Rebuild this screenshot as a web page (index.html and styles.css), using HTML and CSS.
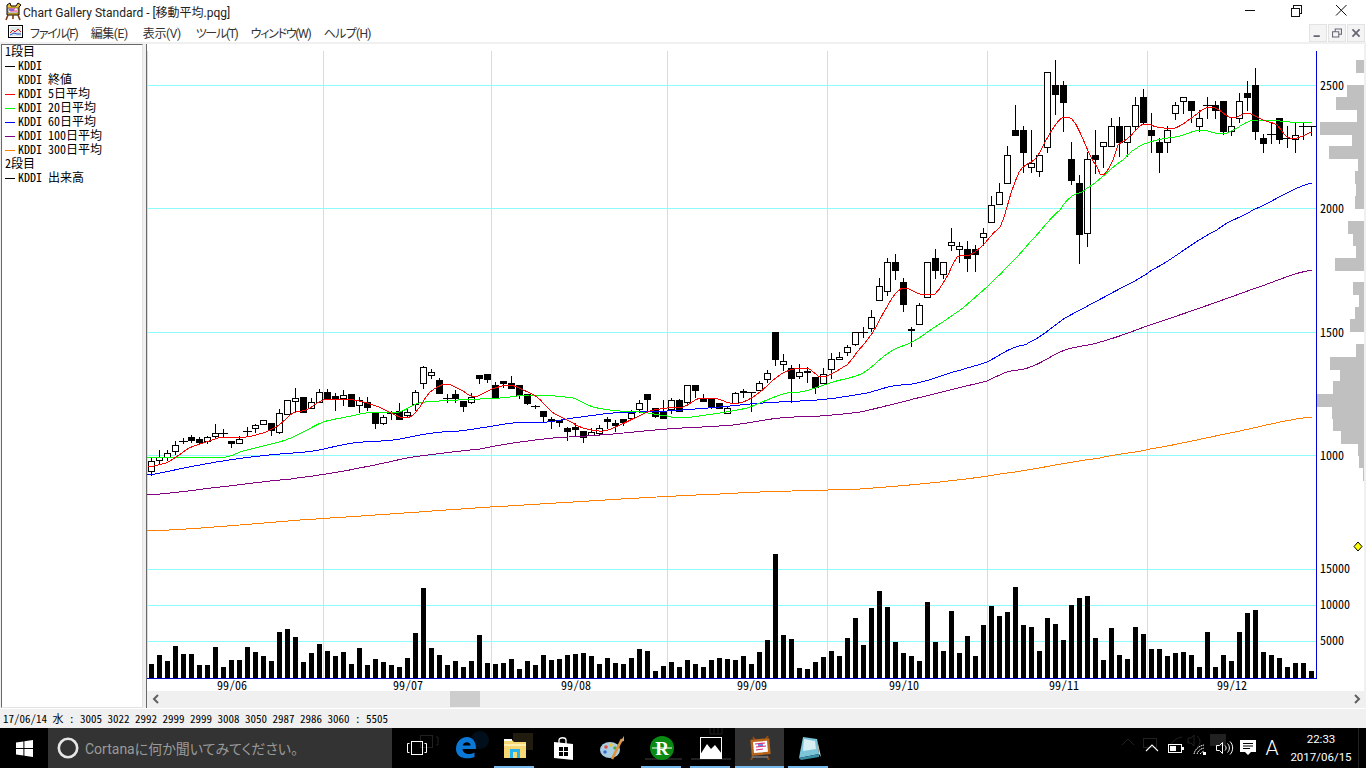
FILE: index.html
```html
<!DOCTYPE html>
<html lang="ja">
<head>
<meta charset="utf-8">
<title>Chart Gallery Standard</title>
<link rel="stylesheet" href="styles.css">
</head>
<body>
<div class="app">
  <header class="titlebar">
    <svg class="app-icon" width="20" height="20" viewBox="0 0 20 20">
      <path d="M4 4 L7 2 L8 5 L13 5 L15 2 L18 4 L16 6 L16 14 L4 14 L4 6 Z" fill="#f4c430" stroke="#000" stroke-width="1"/>
      <rect x="5" y="7" width="10" height="5" fill="#fff" stroke="#333" stroke-width=".6"/>
      <path d="M6 8 H12 M7 10 H14" stroke="#e0208a" stroke-width="1"/>
      <path d="M6 9 H11" stroke="#2040d0" stroke-width="1"/>
      <path d="M5 14 L3 19 M15 14 L17 19 M10 14 V18" stroke="#7a3b10" stroke-width="1.6"/>
    </svg>
    <span class="title-text">Chart Gallery Standard - [移動平均.pqg]</span>
    <div class="win-controls">
      <svg class="wc" width="46" height="22" viewBox="0 0 46 22"><path class="wc-line" d="M17 10.5 H27"/></svg>
      <svg class="wc" width="46" height="22" viewBox="0 0 46 22"><path class="wc-line" d="M17.5 8.5 H25.5 V16.5 H17.5 Z M19.5 8 V5.5 H27.5 V13.5 H26"/></svg>
      <svg class="wc" width="46" height="22" viewBox="0 0 46 22"><path class="wc-line" d="M16 5 L26.5 15.5 M26.5 5 L16 15.5"/></svg>
    </div>
  </header>

  <nav class="menubar">
    <svg class="doc-icon" width="16" height="14" viewBox="0 0 16 14">
      <rect x=".5" y=".5" width="14" height="12" fill="#fff" stroke="#000"/>
      <rect x="2" y="2" width="11" height="9" fill="#dfe8e8"/>
      <path d="M2 8 L5 5 L7 7 L10 4 L13 7" fill="none" stroke="#e02020"/>
      <path d="M2 10 L6 8 L9 9 L13 9" fill="none" stroke="#2050d0"/>
    </svg>
    <span class="menu-item kana">ファイル(F)</span>
    <span class="menu-item kanji">編集(E)</span>
    <span class="menu-item kanji">表示(V)</span>
    <span class="menu-item kana">ツール(T)</span>
    <span class="menu-item kana">ウィンドウ(W)</span>
    <span class="menu-item mid">ヘルプ(H)</span>
    <div class="mdi-controls">
      <svg class="mdi" viewBox="0 0 18 18"><path class="mdi-ico" d="M4 12.5 H11" /></svg>
      <svg class="mdi" viewBox="0 0 18 18"><path class="mdi-thin" d="M4 7.5 H11 V13.5 H4 Z M7 7 V4.5 H14 V10.5 H11"/></svg>
      <svg class="mdi" viewBox="0 0 18 18"><path class="mdi-ico" d="M5 5 L13 13 M13 5 L5 13"/></svg>
    </div>
  </nav>

  <main class="workspace">
    <aside class="legend">
      <div class="legend-row">1段目</div>
      <div class="legend-row"><i class="swatch sw-black"></i>KDDI</div>
      <div class="legend-row"><i class="swatch"></i>KDDI 終値</div>
      <div class="legend-row"><i class="swatch sw-red"></i>KDDI 5日平均</div>
      <div class="legend-row"><i class="swatch sw-green"></i>KDDI 20日平均</div>
      <div class="legend-row"><i class="swatch sw-blue"></i>KDDI 60日平均</div>
      <div class="legend-row"><i class="swatch sw-purple"></i>KDDI 100日平均</div>
      <div class="legend-row"><i class="swatch sw-orange"></i>KDDI 300日平均</div>
      <div class="legend-row">2段目</div>
      <div class="legend-row"><i class="swatch sw-black"></i>KDDI 出来高</div>
    </aside>
    <section class="chart-pane">
      <svg id="chart" class="chart" width="1217" height="647" viewBox="147 44 1217 647" xmlns="http://www.w3.org/2000/svg">
        <g class="grid" id="grid"></g>
        <g id="hist"></g>
        <g id="vol"></g>
        <g id="candles"></g>
        <g id="lines"></g>
        <g class="axis-labels">
          <text x="1320" y="90">2500</text>
          <text x="1320" y="213">2000</text>
          <text x="1320" y="337">1500</text>
          <text x="1320" y="460">1000</text>
          <text x="1320" y="573">15000</text>
          <text x="1320" y="609">10000</text>
          <text x="1320" y="645">5000</text>
          <text x="217" y="690">99/06</text>
          <text x="393" y="690">99/07</text>
          <text x="561" y="690">99/08</text>
          <text x="737" y="690">99/09</text>
          <text x="889" y="690">99/10</text>
          <text x="1049" y="690">99/11</text>
          <text x="1217" y="690">99/12</text>
        </g>
        <polygon class="marker" points="1358,542 1362,546.5 1358,551 1354,546.5"/>
      </svg>
      <div class="scrollbar">
        <svg class="sb-arrow" width="18" height="16" viewBox="0 0 18 16"><path d="M11 4 L7 8 L11 12"/></svg>
        <div class="sb-track"><div class="sb-thumb"></div></div>
        <svg class="sb-arrow" width="18" height="16" viewBox="0 0 18 16"><path d="M7 4 L11 8 L7 12"/></svg>
      </div>
    </section>
  </main>

  <footer class="statusbar">17/06/14 水 : 3005 3022 2992 2999 2999 3008 3050 2987 2986 3060 : 5505</footer>

  <div class="taskbar">
    <svg class="ghosts" width="1366" height="40" viewBox="0 728 1366 40">
      <rect x="420.5" y="735.5" width="12" height="12" fill="none" stroke="#fff"/>
      <path d="M436 737 H438 V745 H436" fill="none" stroke="#fff"/>
      <circle cx="480" cy="740" r="9" fill="#0a78d7"/>
      <rect x="513" y="733" width="20" height="17" fill="#f7d774"/>
      <path d="M645 759 H682 M691 759 H731" stroke="#fff" stroke-width="2"/>
      <path d="M710 728 V734 H722 V728 M714 728 V733 M718 728 V733" fill="none" stroke="#fff"/>
      <path d="M1122 745 L1128 739 L1134 745" fill="none" stroke="#fff"/>
      <rect x="1143.5" y="738.5" width="13" height="9" fill="none" stroke="#fff"/>
      <path d="M1170 747 C1171 742 1176 738 1182 737" fill="none" stroke="#fff"/>
      <path d="M1188 738 H1191 L1194 735 V746 L1191 743 H1188 Z M1197 736 C1201 739 1201 744 1197 747" fill="none" stroke="#fff"/>
      <rect x="1210" y="734" width="16" height="12" fill="#fff"/>
    </svg>
    <div class="start">
      <svg width="17" height="17" viewBox="0 0 17 17"><path fill="#fff" d="M0 2.4 L7.4 1.4 V8 H0 Z M8.4 1.2 L17 0 V8 H8.4 Z M0 9 H7.4 V15.6 L0 14.6 Z M8.4 9 H17 V17 L8.4 15.8 Z"/></svg>
    </div>
    <div class="cortana">
      <svg width="22" height="22" viewBox="0 0 22 22"><circle cx="11" cy="11" r="9.2" fill="none" stroke="#e6e6e6" stroke-width="2.6"/></svg>
      <span class="cortana-text">Cortanaに何か聞いてみてください。</span>
    </div>
    <div class="tasks">
      <div class="task">
        <svg width="20" height="16" viewBox="0 0 20 16"><rect x="4.5" y="1.5" width="11" height="13" fill="none" stroke="#fff"/><path d="M2.5 3.5 H.5 V12.5 H2.5 M17.5 3.5 H19.5 V12.5 H17.5" fill="none" stroke="#fff"/></svg>
      </div>
      <div class="task">
        <svg width="22" height="22" viewBox="0 0 22 22"><path fill="#0a78d7" d="M1 12 C1 4 7 0 12 0 C18 0 21 5 21 12 H7.5 C8 17 14 18.5 19.5 15.5 V20 C13 22.5 1 22 1 12 Z M7.6 8.5 H15.5 C15.5 4.5 9 4 7.6 8.5 Z"/></svg>
      </div>
      <div class="task run">
        <svg width="22" height="20" viewBox="0 0 22 20"><path fill="#f7d774" d="M0 2 H8 L10 4 H22 V20 H0 Z"/><path fill="#fdf0b0" d="M0 6 H22 V8 H0 Z"/><path fill="#fff" d="M0 1 H8 V3 H0Z"/><path fill="#25b5ea" d="M6 11 H16 V20 H13 V14 H9 V20 H6 Z"/></svg>
      </div>
      <div class="task">
        <svg width="21" height="23" viewBox="0 0 21 23"><path fill="#fff" d="M1 5 L20 7 V23 L1 21 Z"/><path fill="none" stroke="#fff" stroke-width="1.3" d="M6 6 V3 C6 0 13 0 13 3 V7"/><path fill="#000" d="M6 10 H10 V14 H6 Z M11 10 H15 V14 H11 Z M6 15 H10 V19 H6 Z M11 15 H15 V19 H11 Z"/></svg>
      </div>
      <div class="task">
        <svg width="26" height="24" viewBox="0 0 26 24"><ellipse cx="10" cy="14" rx="10" ry="8" fill="#a9cfe4"/><circle cx="6" cy="11" r="1.8" fill="#e34d3b"/><circle cx="11" cy="9" r="1.8" fill="#f2c230"/><circle cx="15" cy="12" r="1.8" fill="#4aa84f"/><circle cx="5" cy="16" r="1.8" fill="#3b6fd0"/><path d="M12 23 L22 3" stroke="#e0923a" stroke-width="2.6"/><path d="M20 6 L24 0 L24 5 Z" fill="#caa37a"/></svg>
      </div>
      <div class="task run">
        <svg width="24" height="24" viewBox="0 0 24 24"><circle cx="12" cy="12" r="12" fill="#0a8a12"/><path d="M2 12 H22" stroke="#fff" stroke-width="1"/><text class="r-logo" x="12" y="19" text-anchor="middle">R</text></svg>
      </div>
      <div class="task run">
        <svg width="22" height="22" viewBox="0 0 22 22"><rect width="22" height="22" fill="#fff"/><rect x="1" y="1" width="20" height="15" fill="#000"/><path d="M0 22 V18 L7 7 L11 12 L15 8 L22 17 V22 Z" fill="#fff"/></svg>
      </div>
      <div class="task run active">
        <svg width="22" height="24" viewBox="0 0 22 24"><path d="M4 1 L6 4 M19 0 L16 4 M4 20 L2 24 M18 20 L20 24" stroke="#8a4a14" stroke-width="2"/><rect x="2" y="3" width="19" height="16" fill="#b9651c" transform="rotate(-5 11 11)"/><rect x="4.5" y="5.5" width="14" height="11" fill="#fff" transform="rotate(-5 11 11)"/><path d="M6 8 L16 7 M7 11 L17 10 M7 14 L14 13" stroke="#d4307a" stroke-width="1.2"/><path d="M9 9 L14 9" stroke="#2040d0" stroke-width="1.2"/><path d="M3 21 H19" stroke="#777" stroke-width="1.5"/></svg>
      </div>
      <div class="task run">
        <svg width="24" height="24" viewBox="0 0 24 24"><path fill="#7cc4d8" d="M6 1 L20 3 L22 18 L2 22 Z"/><path fill="#d7eef3" d="M7 3 L18 5 L19 13 L6 15 Z"/><path fill="#3a8fa8" d="M2 22 L22 18 L22 21 L4 24 Z"/><path fill="#e9e1cf" d="M20 3 L24 21 L22 18 Z"/></svg>
      </div>
    </div>
    <div class="tray">
      <svg class="tray-ico" width="24" height="16" viewBox="0 0 24 16"><path d="M6 11 L12 5 L18 11" fill="none" stroke="#fff" stroke-width="1.1"/></svg>
      <svg class="tray-ico" width="24" height="16" viewBox="0 0 24 16"><rect x="4.5" y="4.5" width="13" height="8" fill="none" stroke="#fff"/><rect x="6" y="6" width="6" height="5" fill="#fff"/><rect x="18" y="7" width="2" height="3" fill="#fff"/></svg>
      <svg class="tray-ico" width="24" height="16" viewBox="0 0 24 16"><path d="M6 14 C7 9 11 6 16 5 M9 14 C10 11 12 9 16 8 M12 14 C13 13 14 12 16 11" fill="none" stroke="#fff" stroke-dasharray="1.6 .6"/><rect x="15" y="12" width="3" height="3" fill="#fff"/></svg>
      <svg class="tray-ico" width="24" height="16" viewBox="0 0 24 16"><path d="M4.5 5.5 H7.5 L10.5 2.5 V13.5 L7.5 10.5 H4.5 Z M13 5.5 C14.5 7 14.5 9 13 10.5 M15.5 3.5 C18 6 18 10 15.5 12.5 M18 1.5 C21.5 5 21.5 11 18 14.5" fill="none" stroke="#fff"/></svg>
      <svg class="tray-ico" width="24" height="18" viewBox="0 0 24 18"><path fill="#fff" d="M4 1 H20 V13 H15 L12 16 L9 13 H4 Z"/><path d="M7 4.5 H17 M7 7 H17 M7 9.5 H14" stroke="#000"/></svg>
      <span class="tray-a">A</span>
      <div class="clock"><span>22:33</span><span>2017/06/15</span></div>
      <div class="desktop-peek"></div>
    </div>
  </div>
</div>
<script src="chart.js"></script>
</body>
</html>
```
FILE: styles.css
```css
* { box-sizing: border-box; }
html, body { margin: 0; padding: 0; }
body { width: 1366px; height: 768px; overflow: hidden; background: #f0f0f0; }
.app { width: 1366px; height: 768px; display: flex; flex-direction: column; font-family: "Roboto", "Noto Sans CJK JP", sans-serif; color: #000; }

.titlebar { height: 22px; background: #fff; display: flex; align-items: center; padding-left: 3px; flex: none; }
.app-icon { flex: none; }
.title-text { font-size: 12px; color: #222; white-space: nowrap; font-feature-settings: "palt"; }
.win-controls { margin-left: auto; display: flex; }
.wc { display: block; }
.wc-line { fill: none; stroke: #111; stroke-width: 1; shape-rendering: crispEdges; }
.wc:nth-child(3) .wc-line { shape-rendering: auto; }

.menubar { height: 20px; background: #fff; display: flex; align-items: center; padding-left: 8px; flex: none; font-size: 12px; color: #333; font-feature-settings: "palt"; }
.doc-icon { flex: none; margin-right: 6px; }
.menu-item { margin-right: 15px; white-space: nowrap; }
.kana { letter-spacing: -1.3px; margin-right: 13.3px; }
.kanji { letter-spacing: -.4px; }
.mid { letter-spacing: -.7px; }
.mdi-controls { margin-left: auto; display: flex; gap: 1px; padding-right: 1px; align-self: flex-start; padding-top: 2px; }
.mdi { width: 18px; height: 18px; border: 1px solid #e3e3e3; background: #f4f4f4; display: block; }
.mdi-ico { fill: none; stroke: #667; stroke-width: 2; }
.mdi-thin { fill: none; stroke: #667; stroke-width: 1.2; }

.workspace { flex: none; height: 666px; display: flex; padding-top: 2px; background: #f0f0f0; }
.legend { width: 142px; margin-left: 1px; height: 664px; background: #fff; border: 1px solid; border-color: #696969 #e3e3e3 #e3e3e3 #696969; font-family: "Noto Sans CJK JP", sans-serif; font-feature-settings: "hwid"; font-size: 12px; }
.legend-row { height: 14px; line-height: 12px; padding: 0 0 2px 3px; display: flex; align-items: center; white-space: pre; }
.swatch { display: block; width: 10px; height: 1px; margin: 2px 3px 0 0; flex: none; }
.sw-black { background: #000; }
.sw-red { background: #f00; }
.sw-green { background: #0f0; }
.sw-blue { background: #00f; }
.sw-purple { background: #800080; }
.sw-orange { background: #ff8000; }

.chart-pane { margin-left: 3px; width: 1220px; display: flex; flex-direction: column; height: 664px; border-top: 1px solid #696969; border-left: 1px solid #696969; }
.chart { display: block; background: #fff; flex: none; margin-top: -1px; overflow: visible; }
.chart text { font-family: "Noto Sans CJK JP", sans-serif; font-feature-settings: "hwid"; font-size: 12px; fill: #000; }
.marker { fill: #ff0; stroke: #000; stroke-width: 1; }

.scrollbar { height: 16px; display: flex; align-items: center; background: #f0f0f0; flex: none; }
.sb-arrow { flex: none; display: block; }
.sb-arrow path { fill: none; stroke: #606060; stroke-width: 2; }
.sb-track { flex: 1; height: 16px; padding-left: 285px; }
.sb-thumb { width: 30px; height: 16px; background: #cdcdcd; }

.statusbar { height: 20px; flex: none; padding-left: 3px; background: #f0f0f0; border-top: 1px solid #fff; font-family: "Noto Sans CJK JP", sans-serif; font-feature-settings: "hwid"; font-size: 11px; line-height: 18px; white-space: pre; }

.taskbar { height: 40px; flex: none; background: #000; display: flex; color: #fff; position: relative; }
.ghosts { position: absolute; left: 0; top: 0; opacity: .13; pointer-events: none; }
.start { width: 48px; display: flex; align-items: center; justify-content: center; position: relative; }
.cortana { width: 344px; background: #333; display: flex; align-items: center; padding-left: 9px; gap: 6px; position: relative; }
.cortana-text { font-size: 14px; color: #9a9a9a; white-space: nowrap; font-feature-settings: "palt"; }
.tasks { display: flex; position: relative; }
.task { width: 49px; height: 40px; display: flex; align-items: center; justify-content: center; position: relative; }
.task.run::after { content: ""; position: absolute; left: 4px; right: 5px; bottom: 0; height: 2px; background: #76b9ed; }
.task.active { background: #333; }
.task.active::after { left: 0; right: 0; }
.r-logo { font-family: "Liberation Serif", serif; font-size: 19px; font-weight: 700; fill: #fff; }
.tray { margin-left: auto; display: flex; align-items: center; position: relative; }
.tray-ico { display: block; flex: none; }
.tray-a { width: 24px; text-align: center; font-size: 21px; font-weight: 300; line-height: 1; }
.clock { width: 74px; display: flex; flex-direction: column; align-items: center; font-size: 11.5px; line-height: 18px; }
.desktop-peek { width: 8px; height: 40px; border-left: 1px solid #222; }
```
FILE: chart.js
```js
// Daily bars: [body top, body bottom, wick top, wick bottom, kind] kind 0 white, 1 black, 2 cross
var C = [
[461,471,457,475,0],[457,460,450,463,0],[453,457,450,460,0],[445,451,441,454,0],[441,441,438,443,2],[437,440,435,442,1],[439,442,437,443,1],[437,441,436,443,0],[433,436,424,438,0],[433,433,429,436,2],
[441,443,441,447,1],[439,443,436,443,0],[431,431,427,436,2],[425,428,424,432,0],[420,424,420,424,0],[423,430,423,435,1],[413,432,409,433,0],[400,414,400,414,0],[398,401,388,411,0],[397,412,397,412,1],
[402,408,398,408,0],[392,402,389,402,0],[392,398,389,398,1],[396,399,393,410,1],[395,398,390,405,0],[394,406,394,406,1],[400,405,397,412,0],[402,407,397,410,1],[413,423,412,428,1],[417,423,415,424,0],
[413,413,411,419,2],[411,419,403,419,1],[412,415,408,417,0],[392,404,390,410,0],[367,383,366,388,0],[372,375,369,378,0],[380,393,378,393,1],[398,398,394,402,2],[394,398,390,402,1],[401,406,401,411,1],
[397,402,393,403,0],[375,378,375,383,1],[374,379,374,382,1],[385,398,382,398,1],[381,383,381,387,1],[383,388,376,388,1],[385,395,385,398,1],[394,403,394,404,1],[406,406,405,408,2],[411,416,411,422,1],
[419,421,417,428,1],[420,422,420,426,1],[428,431,427,440,1],[427,429,423,435,1],[431,437,431,442,1],[432,435,428,435,0],[428,433,425,435,0],[419,421,417,428,1],[423,425,420,431,1],[419,422,419,425,1],
[413,418,410,418,0],[403,409,400,412,0],[394,399,394,410,1],[408,416,408,417,1],[411,418,400,418,1],[400,409,398,413,0],[400,411,399,411,1],[385,402,385,404,0],[385,390,385,397,1],[398,401,394,401,1],
[399,407,399,408,1],[403,408,403,408,1],[408,413,406,413,0],[393,403,392,403,0],[391,392,389,397,1],[392,392,392,411,2],[383,390,381,390,0],[373,379,370,382,0],[332,359,332,365,1],[361,364,354,370,0],
[368,378,365,402,1],[372,376,364,378,0],[371,372,367,382,1],[377,387,377,393,1],[374,383,368,383,0],[359,369,353,378,0],[357,359,352,359,0],[347,352,345,355,0],[332,344,332,345,0],[332,332,327,337,2],
[317,328,310,331,0],[286,300,278,300,0],[262,291,258,295,0],[262,270,254,279,1],[282,304,278,311,1],[329,330,327,346,1],[305,324,303,324,0],[262,297,262,297,0],[258,270,249,278,1],[262,274,262,278,0],
[242,245,228,250,0],[246,249,242,262,0],[249,258,241,271,1],[249,254,245,271,1],[233,237,228,245,0],[205,222,196,222,0],[192,204,183,204,0],[155,183,146,183,0],[130,135,105,135,1],[130,152,126,172,1],
[163,167,130,172,0],[155,171,155,176,0],[72,147,72,152,0],[85,94,60,114,1],[85,102,81,131,1],[159,180,142,184,1],[183,234,175,263,1],[159,233,152,246,0],[155,159,130,173,1],[142,146,142,167,0],
[126,146,118,146,0],[126,142,117,156,1],[126,142,126,156,0],[105,126,97,130,0],[97,122,89,124,1],[130,135,113,152,1],[142,152,138,172,1],[130,142,126,152,0],[105,113,102,119,0],[97,101,97,113,0],
[101,110,101,122,1],[118,126,110,131,0],[105,105,97,118,2],[105,110,101,118,1],[101,131,101,134,1],[126,131,118,135,0],[101,118,93,122,0],[93,97,81,110,1],[85,131,68,139,1],[138,143,134,152,1],
[134,134,122,143,2],[118,139,118,143,1],[138,138,126,147,2],[135,139,122,152,0],[126,126,122,139,2],[126,126,126,135,2]];

var V = [14,23,17,32,24,24,13,13,31,11,18,18,31,26,22,17,46,49,41,16,25,34,27,22,26,14,30,13,19,16,13,11,20,45,90,30,23,13,17,11,17,43,15,14,15,19,9,17,13,23,18,19,23,24,25,22,14,20,15,14,20,29,27,7,12,16,11,18,14,11,18,20,19,18,22,14,26,38,124,43,39,10,9,16,21,27,22,40,60,33,70,87,71,36,25,22,17,76,36,27,67,25,42,22,53,72,62,66,91,53,51,27,60,54,38,73,80,82,40,18,50,23,19,51,44,29,29,22,25,26,23,11,46,11,23,17,46,65,68,26,23,20,11,15,15,7];

var HIST = [[60,1356],[85,1347],[97,1336],[109,1357],[122,1320],[134,1352],[146,1329],[159,1358],[171,1355],[183,1356],[196,1355],[221,1348],[233,1353],[245,1356],[258,1335],[282,1353],[295,1359],[307,1355],[319,1350],[344,1356],[357,1330],[369,1340],[381,1333],[394,1317],[406,1332],[418,1333],[431,1341],[443,1358],[455,1359],[468,1363]];
var HIST_ROW = 12.33;

var LINES = [
["#ff8000","147,531 300,520 490,507 720,494 860,489 930,483 1000,474 1100,458 1150,449 1230,433 1312,417"],
["#800080","147,495 220,487 291,479 319,475 359,468 413,457 480,449 513,443 553,438 600,435 667,429 733,425 780,418 820,416 860,412 890,405 913,399 950,390 987,381 1007,372 1030,367 1065,350 1100,342 1147,326 1200,308 1250,290 1312,270"],
["#0000ff","147,475 189,467 229,460 269,455 313,451 353,443 393,440 433,433 459,431 480,428 513,423 547,422 573,418 613,413 667,411 720,407 763,403 800,401 827,399 867,393 893,386 917,383 950,373 987,362 1013,348 1030,342 1065,318 1110,294 1152,270 1217,230 1253,210 1312,183"],
["#00ff00","147,457 203,457 226,457 243,451 263,446 286,440 303,432 323,422 346,417 373,412 399,412 419,403 439,401 480,399 500,398 530,395 573,398 593,407 620,411 640,412 667,416 680,418 720,413 747,408 767,400 787,393 800,392 833,382 863,373 890,352 912,342 933,328 963,308 987,287 1007,267 1030,242 1060,210 1072,196 1087,188 1123,160 1140,146 1157,140 1180,136 1200,130 1222,134 1233,130 1250,121 1267,120 1303,123 1312,122"],
["#ff0000","148,467 166,463 176,457 189,448 206,442 223,437 246,437 266,432 279,425 293,413 306,410 323,400 346,399 363,402 379,407 393,414 406,418 416,412 429,393 446,384 463,391 473,397 480,395 492,389 510,385 523,390 537,397 552,412 567,420 583,428 603,431 620,425 637,417 650,411 667,408 683,407 700,398 718,399 730,403 743,402 760,392 777,377 790,370 807,368 822,377 847,365 857,352 873,332 887,307 897,292 905,288 920,294 935,294 948,275 957,257 970,255 983,245 997,230 1000,227 1015,182 1023,167 1037,157 1050,133 1063,117 1072,119 1097,167 1104,175 1113,160 1118,145 1128,138 1143,124 1157,127 1175,128 1190,119 1208,107 1217,109 1232,118 1247,113 1263,120 1277,125 1287,137 1297,138 1312,132"]
];

var NS = "http://www.w3.org/2000/svg";
function add(parent, tag, attrs) {
  var el = document.createElementNS(NS, tag);
  for (var k in attrs) el.setAttribute(k, attrs[k]);
  el.setAttribute("shape-rendering", "crispEdges");
  parent.appendChild(el);
  return el;
}
function box(g, x, y, w, h, fill) { return add(g, "rect", {x: x, y: y, width: w, height: h, fill: fill}); }

function smooth(str) {
  var p = str.split(" ").map(function (s) { return s.split(",").map(Number); });
  var out = [];
  for (var i = 0; i < p.length - 1; i++) {
    var a = p[Math.max(i - 1, 0)], b = p[i], c = p[i + 1], d = p[Math.min(i + 2, p.length - 1)];
    var n = Math.max(1, Math.round((c[0] - b[0]) / 4));
    var lo = Math.min(b[1], c[1]), hi = Math.max(b[1], c[1]);
    for (var s = 0; s < n; s++) {
      var t = s / n, t2 = t * t, t3 = t2 * t;
      var x = b[0] + (c[0] - b[0]) * t;
      var y = 0.5 * (2 * b[1] + (c[1] - a[1]) * t + (2 * a[1] - 5 * b[1] + 4 * c[1] - d[1]) * t2 + (3 * b[1] - a[1] - 3 * c[1] + d[1]) * t3);
      y = Math.min(hi, Math.max(lo, y));
      out.push(x.toFixed(1) + "," + y.toFixed(1));
    }
  }
  out.push(p[p.length - 1].join(","));
  return out.join(" ");
}

var grid = document.getElementById("grid");
var CYAN = "#8ffcfc";
[85, 208, 332, 455, 569, 605, 641].forEach(function (y) { box(grid, 147, y, 1169, 1, CYAN); });
[147, 323, 491, 667, 827, 987, 1147].forEach(function (x) { box(grid, x, 51, 1, 627, CYAN); });
box(grid, 147, 678, 1170, 1, "#0000c8");
box(grid, 1316, 51, 1, 628, "#0000d8");

var hist = document.getElementById("hist");
HIST.forEach(function (r) { box(hist, r[1], r[0], 1364 - r[1], HIST_ROW + 0.4, "#c0c0c0"); });
box(hist, 1364, 44, 2, 647, "#f0f0f0");

var vol = document.getElementById("vol");
V.forEach(function (h, i) { box(vol, 149 + 8 * i, 678 - h, 5, h, "#000"); });

var candles = document.getElementById("candles");
C.forEach(function (c, i) {
  var x = 151 + 8 * i;
  box(candles, x, c[2], 1, c[3] - c[2] + 1, "#000");
  if (c[4] === 2) { box(candles, x - 4, c[0], 9, 1, "#000"); return; }
  box(candles, x - 3, c[0], 7, c[1] - c[0] + 1, "#000");
  if (c[4] === 0) box(candles, x - 2, c[0] + 1, 5, c[1] - c[0] - 1, "#fff");
});

var lines = document.getElementById("lines");
LINES.forEach(function (l) {
  add(lines, "polyline", {points: smooth(l[1]), fill: "none", stroke: l[0], "stroke-width": 1});
});
```
